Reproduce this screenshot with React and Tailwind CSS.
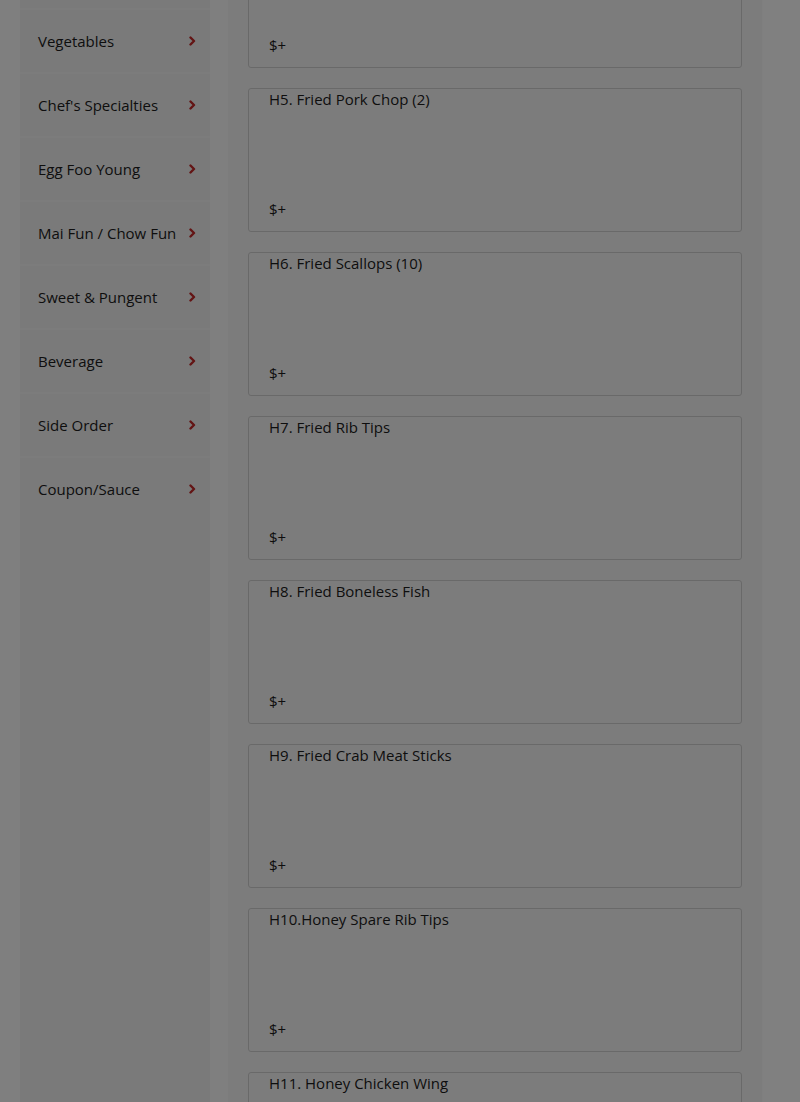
import React from 'react';

const categories = [
    'Appetizers',
    'Vegetables',
    "Chef's Specialties",
    'Egg Foo Young',
    'Mai Fun / Chow Fun',
    'Sweet & Pungent',
    'Beverage',
    'Side Order',
    'Coupon/Sauce',
];

const items = [
    'H4. Fried Shrimp (10)',
    'H5. Fried Pork Chop (2)',
    'H6. Fried Scallops (10)',
    'H7. Fried Rib Tips',
    'H8. Fried Boneless Fish',
    'H9. Fried Crab Meat Sticks',
    'H10.Honey Spare Rib Tips',
    'H11. Honey Chicken Wing',
];

const Chevron = () => (
    <svg width="7" height="10" viewBox="0 0 7 10" className="shrink-0">
        <path d="M1.5 1.5 L5 5 L1.5 8.5" fill="none" stroke="#c62828" strokeWidth="2.4" strokeLinecap="round" strokeLinejoin="round" />
    </svg>
);

const App = () => {
    return (
        <div className="relative h-[1102px] overflow-hidden bg-white text-[#1c1c1c]" style={{ fontFamily: '"Open Sans", "Liberation Sans", sans-serif' }}>
            <div className="flex -mt-[54px] pl-5">
                {/* category list */}
                <aside className="w-[190px] shrink-0 bg-[#f4f4f4] min-h-[1300px]">
                    <ul className="flex flex-col gap-[2px] bg-[#f8f8f8]">
                        {categories.map((c) => (
                            <li key={c} className="h-[62px] bg-[#f4f4f4] flex items-center justify-between pl-[18px] pr-[14px] text-[15px]">
                                <span>{c}</span>
                                <Chevron />
                            </li>
                        ))}
                    </ul>
                </aside>

                {/* dishes */}
                <main className="ml-[18px] w-[534px] bg-[#f9f9f9] px-5 -mt-[22px]">
                    <div className="flex flex-col gap-5">
                        {items.map((name) => (
                            <div key={name} className="h-[144px] border border-[#d2d2d2] rounded-[3px] bg-[#f9f9f9] flex flex-col justify-between pl-5 pb-[12px] text-[15px] leading-5">
                                <div>{name}</div>
                                <div>$+</div>
                            </div>
                        ))}
                    </div>
                </main>
            </div>

            {/* modal backdrop */}
            <div className="absolute inset-0 bg-black/50" />
        </div>
    );
};

export default App;
